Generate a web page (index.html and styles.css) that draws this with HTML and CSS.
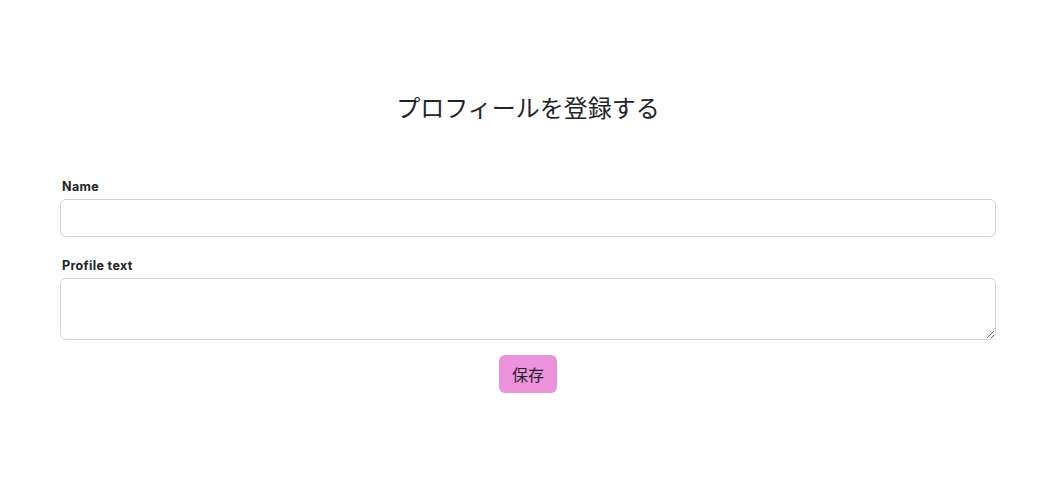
FILE: index.html
```html
<!DOCTYPE html>
<html lang="ja">
<head>
<meta charset="utf-8">
<link rel="stylesheet" href="styles.css">
</head>
<body>
<main class="page">
  <h1 class="title">プロフィールを登録する</h1>
  <form class="form">
    <div class="field">
      <label class="label" for="name">Name</label>
      <input class="input" id="name" type="text">
    </div>
    <div class="field">
      <label class="label" for="profile">Profile text</label>
      <textarea class="textarea" id="profile"></textarea>
    </div>
    <div class="actions">
      <button class="btn" type="button">保存</button>
    </div>
  </form>
</main>
</body>
</html>
```
FILE: styles.css
```css
html, body {
  margin: 0;
  padding: 0;
  background: #fff;
}
body {
  font-family: "Noto Sans", "Noto Sans CJK JP", sans-serif;
  color: #212529;
}
.page {
  padding: 0 52px 0 60px;
}
.title {
  margin: 0;
  padding-top: 92px;
  text-align: center;
  font-weight: 400;
  font-size: 24px;
  line-height: 32px;
  color: #212529;
}
.form {
  margin-top: 55px;
  display: flex;
  flex-direction: column;
}
.field {
  display: flex;
  flex-direction: column;
  margin-bottom: 21px;
}
.field + .field { margin-bottom: 0; }
.label {
  font-family: "Inter", sans-serif;
  font-weight: 700;
  font-size: 12.5px;
  letter-spacing: 0.35px;
  line-height: 16px;
  padding-left: 2px;
  margin-bottom: 4px;
}
.input, .textarea {
  box-sizing: border-box;
  width: 100%;
  border: 1px solid #cfd3dc;
  border-radius: 6px;
  background: #fff;
  font: inherit;
  margin: 0;
}
.input { height: 38px; }
.textarea { height: 62px; resize: vertical; display: block; }
.actions {
  display: flex;
  justify-content: center;
  margin-top: 15px;
}
.btn {
  width: 58px;
  height: 38px;
  border: none;
  border-radius: 6px;
  background: #ec92dc;
  color: #212529;
  font-family: "Noto Sans CJK JP", sans-serif;
  font-size: 16px;
  padding: 0;
}
```
